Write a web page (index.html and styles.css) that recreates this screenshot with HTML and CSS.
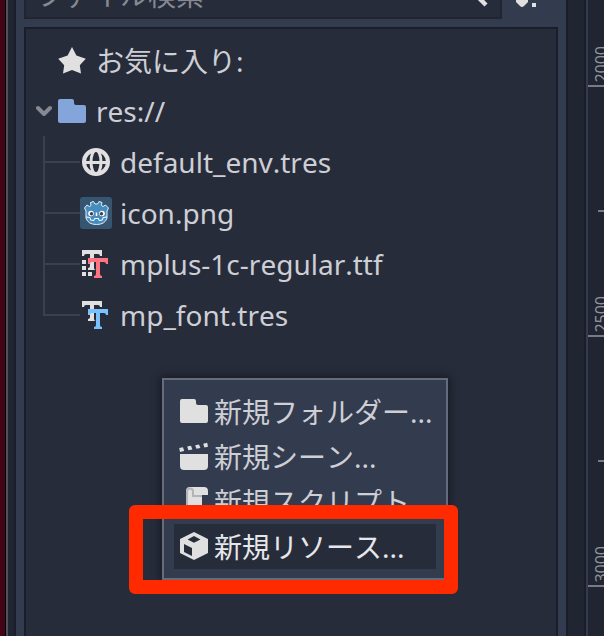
FILE: index.html
```html
<!DOCTYPE html>
<html lang="ja">

<head>
    <meta charset="UTF-8">
    <meta name="viewport" content="width=device-width, initial-scale=1.0">
    <title>FileSystem</title>
    <link rel="stylesheet" href="styles.css">
</head>

<body>
    <div class="desktop"></div>
    <div class="gutter"></div>
    <main class="dock">
        <div class="toolbar">
            <div class="search">
                <input type="text" placeholder="ファイル検索" aria-label="ファイル検索">
                <svg class="icon" viewBox="0 0 16 16"><circle cx="6" cy="5" r="4" fill="none" stroke="#e0e0e0" stroke-width="2"/><path d="M9 8l5 5" stroke="#e0e0e0" stroke-width="2.200"/></svg>
            </div>
            <button class="sort" aria-label="並べ替え">
                <svg class="icon" viewBox="0 0 16 16" fill="#e0e0e0"><path d="M1 2h6v10l-2 2q-1 1-2 0l-2-2zM9 12.500h2v2H9z"/></svg>
            </button>
        </div>
        <div class="tree">
            <div class="row favorites">
                <svg class="icon" viewBox="0 0 32 32"><path d="M16 3l4.400 8.600 9.400 3.200-6 6.400 1.200 8.300-9-3.500-9 3.500 1.200-8.300-6-6.400 9.400-3.200z" fill="#e0e0e0"/></svg>
                <span>お気に入り:</span>
            </div>
            <div class="row">
                <button class="caret" aria-label="折りたたむ">
                    <svg viewBox="0 0 16 12"><path d="M2 3l6 6 6-6" fill="none" stroke="#868993" stroke-width="4" stroke-linecap="round" stroke-linejoin="round"/></svg>
                </button>
                <svg class="icon" viewBox="0 0 16 16"><path d="M2 2a1 1 0 0 0-1 1v10a1 1 0 0 0 1 1h12a1 1 0 0 0 1-1V6a1 1 0 0 0-1-1h-4a1 1 0 0 1-1-1V3a1 1 0 0 0-1-1z" fill="#84a5d9"/></svg>
                <span>res://</span>
            </div>
            <ul class="files">
                <li class="row">
                    <svg class="icon" viewBox="0 0 32 32" fill="none" stroke="#e0e0e0"><circle cx="16" cy="16" r="12" stroke-width="4"/><ellipse cx="16" cy="16" rx="5" ry="12" stroke-width="3"/><path d="M4 16.500h24" stroke-width="3"/></svg>
                    <span>default_env.tres</span>
                </li>
                <li class="row">
                    <svg class="icon" viewBox="0 0 32 32">
                        <rect width="32" height="32" rx="3" fill="#355570"/>
                        <path d="M4.500 11l2.500-3 2.500 1.500 1.500-1-.5-3 3-1 1.500 2.500h2.500L19 4.500l3 1-.5 3 1.500 1L25.500 8l3 3-1.500 3v7q-2 6.500-10.500 6.500T6 21v-7z" fill="#478cbf" stroke="#e8f0f6" stroke-width="1"/>
                        <path d="M6 20l4 .5.500 2.500 3.500.5.500-2h4l.5 2 3.500-.5.500-2.500 4-.5" fill="none" stroke="#fff" stroke-width="1"/>
                        <circle cx="11" cy="16.500" r="2.800" fill="#fff"/><circle cx="22" cy="16.500" r="2.800" fill="#fff"/>
                        <circle cx="11.500" cy="16.800" r="1.700" fill="#414042"/><circle cx="21.500" cy="16.800" r="1.700" fill="#414042"/>
                        <path d="M16.500 15.500v3.500" stroke="#fff" stroke-width="1.500"/>
                    </svg>
                    <span>icon.png</span>
                </li>
                <li class="row">
                    <svg class="icon" viewBox="0 0 16 16">
                        <path d="M1 1h10v3h-1a1 1 0 0 0-1-1H7v7a1 1 0 0 0 1 1H4v-1a1 1 0 0 0 1-1V3H3a1 1 0 0 0-1 1H1zM1 6h2v2H1zM1 9h2v2H1zM1 12h2v2H1zM4 12h2v2H4z" fill="#e0e0e0"/>
                        <path d="M4 5h10v3h-1a1 1 0 0 0-1-1h-2v6a1 1 0 0 0 1 1v1H7v-1a1 1 0 0 0 1-1V7H6a1 1 0 0 0-1 1H4z" fill="#ff7480"/>
                    </svg>
                    <span>mplus-1c-regular.ttf</span>
                </li>
                <li class="row">
                    <svg class="icon" viewBox="0 0 16 16">
                        <path d="M1 1h10v3h-1a1 1 0 0 0-1-1H7v7a1 1 0 0 0 1 1H4v-1a1 1 0 0 0 1-1V3H3a1 1 0 0 0-1 1H1z" fill="#e0e0e0"/>
                        <path d="M4 5h10v3h-1a1 1 0 0 0-1-1h-2v6a1 1 0 0 0 1 1v1H7v-1a1 1 0 0 0 1-1V7H6a1 1 0 0 0-1 1H4z" fill="#7ac1ff"/>
                    </svg>
                    <span>mp_font.tres</span>
                </li>
            </ul>
        </div>
    </main>
    <div class="gutter right"></div>
    <aside class="ruler">
        <div class="tick"><span>2000</span></div>
        <div class="tick"><span>2500</span></div>
        <div class="tick"><span>3000</span></div>
    </aside>

    <div class="menu">
        <button>
            <svg class="icon" viewBox="0 0 16 16"><path d="M2 2a1 1 0 0 0-1 1v10a1 1 0 0 0 1 1h12a1 1 0 0 0 1-1V6a1 1 0 0 0-1-1h-4a1 1 0 0 1-1-1V3a1 1 0 0 0-1-1z" fill="#e0e0e0"/></svg>
            新規フォルダー...
        </button>
        <button>
            <svg class="icon" viewBox="0 0 16 16" fill="#e0e0e0"><path d="M1 7h14v6a2 2 0 0 1-2 2H3a2 2 0 0 1-2-2zM.6 4l1.900-.4.600 1.900L1 6zM4.600 3.300l1.900-.4.700 1.800-2 .4zM8.600 2.600l1.900-.4.700 1.800-2 .4zM12.600 1.900l2-.5.400 2-1.800.3z"/></svg>
            新規シーン...
        </button>
        <button>
            <svg class="icon" viewBox="0 0 16 16">
                <path d="M6 1a2 2 0 0 0-2 2v9H1v1a2 2 0 0 0 2 2h7a2 2 0 0 0 2-2V5h3V3a2 2 0 0 0-2-2z" fill="#e0e0e0"/>
                <path d="M4.500 12V3.200a1.500 1.500 0 0 1 3 0V5.500h4.500" fill="none" stroke="#b4b4b4"/>
            </svg>
            新規スクリプト...
        </button>
        <button class="active">
            <svg class="icon" viewBox="0 0 16 16"><path d="M8 1l7 3.500v7L8 15l-7-3.500v-7zM8 3L4.800 4.800 8 6.400l3.200-1.600zM3 7v4l4 2V9z" fill="#e0e0e0" fill-rule="evenodd"/></svg>
            新規リソース...
        </button>
    </div>
    <div class="highlight"></div>
</body>

</html>
```
FILE: styles.css
```css
* {
    margin: 0;
    padding: 0;
    box-sizing: border-box;
}

body {
    display: flex;
    height: 100vh;
    overflow: hidden;
    position: relative;
    background: #202531;
    color: #cdcfd5;
    font-family: "Noto Sans", "Noto Sans CJK JP", sans-serif;
    font-size: 28px;
    font-kerning: none;
}

button {
    background: none;
    border: none;
    color: inherit;
    font: inherit;
    font-kerning: none;
}

.icon {
    width: 32px;
    height: 32px;
    flex: none;
    display: block;
}

.desktop {
    width: 8px;
    background: #430515;
    border-right: 2px solid #50535b;
    box-shadow: inset -1px 0 #000;
}

.gutter {
    width: 8px;
    border-right: 2px solid #191e2a;
}

.gutter.right {
    width: 20px;
    border-left: 2px solid #191e2a;
}

/* File system dock */
.dock {
    flex: 1;
    display: flex;
    flex-direction: column;
    gap: 8px;
    padding: 0 8px;
    background: #333b4f;
}

.toolbar {
    display: flex;
    align-items: flex-end;
    gap: 10px;
    height: 19px;
    overflow: hidden;
}

.search {
    flex: 1;
    display: flex;
    align-items: center;
    height: 48px;
    padding: 0 10px;
    background: #272c3b;
    border: 2px solid #202531;
}

.search input {
    flex: 1;
    min-width: 0;
    background: none;
    border: none;
    outline: none;
    color: #cdcfd5;
    font: inherit;
}

.search input::placeholder {
    color: #868993;
}

.sort {
    width: 46px;
    padding: 0 0 9px 2px;
}

.tree {
    flex: 1;
    padding-top: 5px;
    background: #272c3b;
    border: 2px solid #191e2a;
    border-bottom: none;
}

.row {
    display: flex;
    align-items: center;
    height: 51px;
    padding-left: 10px;
    white-space: nowrap;
}

.row span {
    margin-left: 8px;
}

.favorites {
    padding-left: 30px;
}

.caret {
    width: 16px;
    margin-right: 4px;
}

.caret svg {
    display: block;
    width: 16px;
    height: 12px;
}

.files {
    position: relative;
    list-style: none;
}

.files::before {
    content: "";
    position: absolute;
    top: 0;
    bottom: 25px;
    left: 17px;
    width: 2px;
    background: #3c404e;
}

.files .row {
    padding-left: 17px;
}

.files .row::before {
    content: "";
    width: 37px;
    height: 2px;
    background: #3c404e;
}

/* Canvas ruler */
.ruler {
    width: 18px;
    overflow: hidden;
    border-left: 2px solid #333b4f;
}

.tick {
    display: flex;
    align-items: flex-end;
    position: relative;
    height: 250px;
    padding: 0 0 2px 3px;
    border-bottom: 2px solid #787b87;
    color: #8f929c;
    font-size: 16px;
    line-height: 20px;
}

.tick:first-child {
    margin-top: -163px;
}

.tick::after {
    content: "";
    position: absolute;
    top: 123px;
    right: 0;
    width: 6px;
    height: 2px;
    background: #787b87;
}

.tick span {
    writing-mode: vertical-rl;
    transform: rotate(180deg);
}

/* Context menu */
.menu {
    position: absolute;
    top: 378px;
    left: 162px;
    width: 286px;
    padding: 9px 10px;
    background: #333b4f;
    border: 2px solid #666c7b;
    box-shadow: 0 0 8px 2px rgba(0, 0, 0, 0.4);
}

.menu button {
    display: flex;
    align-items: center;
    gap: 4px;
    width: 100%;
    height: 45px;
    padding: 0 4px 2px;
    white-space: nowrap;
}

.menu .active {
    background: #272c3b;
    color: #e6e7ea;
}

.highlight {
    position: absolute;
    top: 505px;
    left: 129px;
    width: 329px;
    height: 89px;
    border: 14px solid #ff2a00;
    border-radius: 6px;
}
```
